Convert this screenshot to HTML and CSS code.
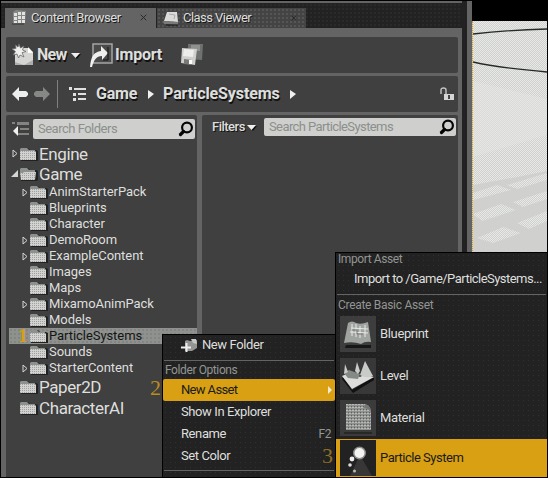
FILE: index.html
```html
<!DOCTYPE html>
<html lang="en">
<head>
<meta charset="utf-8">
<title>Content Browser</title>
<link rel="stylesheet" href="styles.css">
</head>
<body>
<svg class="defs" width="0" height="0">
  <defs>
    <pattern id="grain" width="2" height="2" patternUnits="userSpaceOnUse"><rect width="2" height="2" fill="#d2d2d0"/><rect width="1" height="1" fill="#a0a2a0"/></pattern>
    <pattern id="mesh" width="3" height="3" patternUnits="userSpaceOnUse"><rect width="3" height="3" fill="#8e918e"/><rect y="1" width="2" height="1" fill="#b9bbb9"/><rect x="2" width="1" height="1" fill="#5d5f5d"/></pattern>
    <pattern id="dither" width="2" height="2" patternUnits="userSpaceOnUse"><rect width="1" height="1" fill="#e6e9e6"/><rect x="1" y="1" width="1" height="1" fill="#e6e9e6"/></pattern>
    <symbol id="folder" viewBox="0 0 18 14"><path d="M1 14V2l1-1h6l2 2h6l2 1v10z" fill="#222"/><path d="M0 12V2l1-1h6l2 2h6v2H0z" fill="#8c908e"/><path d="M0 4h15l1 1v8H0z" fill="url(#grain)"/></symbol>
    <symbol id="open" viewBox="0 0 18 14"><path d="M1 14V2l1-1h6l2 2h6l2 1v9l-1 1z" fill="#222"/><path d="M0 12V2l1-1h6l2 2h6v4H0z" fill="#8c908e"/><path d="M0 6h3l1-1h12l-1 8H1z" fill="url(#grain)"/></symbol>
    <symbol id="closed-arrow" viewBox="0 0 6 9"><path d="M1 1v7l4-3.500z" fill="none" stroke="#d4d5d3"/></symbol>
    <symbol id="search" viewBox="0 0 16 16"><circle cx="9" cy="6.500" r="4.900" fill="none" stroke="#050505" stroke-width="2.200"/><path d="M5.500 10.500l-3 3" stroke="#050505" stroke-width="3.200" stroke-linecap="round"/></symbol>
    <symbol id="x" viewBox="0 0 7 7"><path d="M.7.7l5.600 5.600M6.300.7L.7 6.300" stroke="#292929" stroke-width="1"/></symbol>
  </defs>
</svg>
<div class="app">
  <div class="browser">
    <div class="tabs">
      <div class="tab active">
        <svg width="16" height="16" viewBox="0 0 16 16"><path d="M2 2l3-2 10 1-1 12-12 1z" fill="#858885"/><path d="M3 3h3v3H3zM7 2h3v3H7zM11 2h3v3h-3zM3 7h3v3H3zM7 6h3v3H7zM11 6h3v3h-3zM3 11h3v2H3zM7 10h3v3H7zM11 10h3v3h-3z" fill="#e2e3e1"/><path d="M1 14h12" stroke="#333"/></svg>
        <span class="t-cb">Content Browser</span><svg class="close" width="7" height="7"><use href="#x"/></svg>
      </div>
      <div class="tab">
        <svg width="16" height="16" viewBox="0 0 16 16"><path d="M4 2h10l1 10-14-1z" fill="#dcdddb"/><path d="M0 11l15 1v3L1 14z" fill="#777a77"/><path d="M6 4l6 1-1 4" fill="none" stroke="#aaa"/><path d="M3 15h12" stroke="#111"/></svg>
        <span class="t-cv">Class Viewer</span><svg class="close" width="6" height="6"><use href="#x"/></svg>
      </div>
    </div>
    <div class="content">
      <div class="bar toolbar">
        <svg class="i-new" width="22" height="22" viewBox="0 0 22 22"><path d="M3 4h14l4 4v13H3z" fill="#d5d6d4"/><path d="M16 3v6h5z" fill="#fff"/><path d="M3 18l9 3 9-5v5H3z" fill="#adafad"/><path d="M7 0l1.500 4L12 2l-1.500 4L14 7.500l-4 1.200 2 4.300-4-2-1.500 3L5 10l-4 1 2.500-3.500L0 5l4-.500L3.500 1 6 3z" fill="#f0f1ef" stroke="#686a68" stroke-width=".8"/></svg>
        <span class="t-new">New</span>
        <svg class="i-down" width="10" height="7" viewBox="0 0 10 7"><path d="M1 2h9L6 7z" fill="#111"/><path d="M0 1h9L4.500 6z" fill="#f0f1ef"/></svg>
        <svg class="i-import" width="24" height="25" viewBox="0 0 24 25"><path d="M3 1h19v19H3z" fill="#494a49" stroke="#a2a4a2" stroke-width="1.500"/><path d="M0 24C1 13 4 9 11 8V3l7 7-6 7v-4C6 13 4 17 2 24z" fill="#eff0ee"/><path d="M18 4v13h-5" fill="none" stroke="#151515"/></svg>
        <span class="t-import">Import</span>
        <svg class="i-save" width="24" height="22" viewBox="0 0 24 22"><path d="M8 0h15l-1 16-14-1z" fill="#6e716e"/><path d="M11 1h9v6h-9z" fill="#8e918e"/><path d="M2 4l15 1-2 16L1 19z" fill="#cfd0ce"/><path d="M4 5l10 1-1 7-10-1z" fill="#edeeec"/><path d="M4 15l8 1v5l-8-1z" fill="#777a77"/><path d="M9 16h3v4H9z" fill="#fff"/></svg>
      </div>
      <div class="bar nav">
        <svg class="i-back" width="16" height="14" viewBox="0 0 16 14"><path d="M0 7l7-7v4h7l2 2v2l-2 2H7v4z" fill="#eceded"/></svg>
        <svg class="i-next" width="16" height="14" viewBox="0 0 16 14"><path d="M16 7L9 0v4H2L0 6v2l2 2h7v4z" fill="#858885"/></svg>
        <i class="rule"></i>
        <svg class="i-path" width="17" height="14" viewBox="0 0 17 14"><path d="M0 0h3v3H0zM5 1h12v2H5zM4 6h3v3H4zM9 6h8v2H9zM4 11h3v3H4zM9 11h8v2H9z" fill="#e1e2e0"/></svg>
        <span class="t-game">Game</span><svg class="crumb" width="6" height="10"><path d="M0 1v9l6-5z" fill="#f0f1ef"/></svg>
        <span class="t-ps">ParticleSystems</span><svg class="crumb" width="6" height="10"><path d="M0 1v9l6-5z" fill="#f0f1ef"/></svg>
        <svg class="lock" width="14" height="14" viewBox="0 0 14 14"><path d="M1 7V3q0-2 2.500-2T6 3v5" fill="none" stroke="#c3c5c3" stroke-width="1.400"/><path d="M4 7h10v6H4z" fill="#d5d6d4"/><path d="M8 8h2v4H8z" fill="#454545"/></svg>
      </div>
      <div class="panes">
        <div class="pane tree">
          <div class="find"><svg width="17" height="15" viewBox="0 0 17 15"><path d="M0 0h3v2H0zM5 0h12v3H5zM8 6h9v2H8zM5 11h12v2H5z" fill="#818481"/><path d="M1 9l5-5v10z" fill="#f0f1ef"/></svg>
            <div class="search"><span class="t-sf">Search Folders</span><svg width="16" height="16"><use href="#search"/></svg></div></div>
          <div class="node big"><svg class="arrow" width="6" height="9"><use href="#closed-arrow"/></svg><svg class="folder" width="18" height="14"><use href="#folder"/></svg><span>Engine</span></div>
          <div class="node big game"><svg class="arrow" width="8" height="8"><path d="M7 0v7H0z" fill="#d4d5d3"/></svg><svg class="folder" width="18" height="14"><use href="#open"/></svg><span>Game</span></div>
          <div class="node"><svg class="arrow" width="6" height="9"><use href="#closed-arrow"/></svg><svg class="folder" width="18" height="14"><use href="#folder"/></svg><span>AnimStarterPack</span></div>
          <div class="node"><i class="arrow"></i><svg class="folder" width="18" height="14"><use href="#folder"/></svg><span>Blueprints</span></div>
          <div class="node"><i class="arrow"></i><svg class="folder" width="18" height="14"><use href="#folder"/></svg><span>Character</span></div>
          <div class="node"><svg class="arrow" width="6" height="9"><use href="#closed-arrow"/></svg><svg class="folder" width="18" height="14"><use href="#folder"/></svg><span>DemoRoom</span></div>
          <div class="node"><svg class="arrow" width="6" height="9"><use href="#closed-arrow"/></svg><svg class="folder" width="18" height="14"><use href="#folder"/></svg><span>ExampleContent</span></div>
          <div class="node"><i class="arrow"></i><svg class="folder" width="18" height="14"><use href="#folder"/></svg><span>Images</span></div>
          <div class="node"><i class="arrow"></i><svg class="folder" width="18" height="14"><use href="#folder"/></svg><span>Maps</span></div>
          <div class="node"><svg class="arrow" width="6" height="9"><use href="#closed-arrow"/></svg><svg class="folder" width="18" height="14"><use href="#folder"/></svg><span>MixamoAnimPack</span></div>
          <div class="node"><i class="arrow"></i><svg class="folder" width="18" height="14"><use href="#folder"/></svg><span>Models</span></div>
          <div class="node selected"><b class="step">1</b><svg class="folder" width="18" height="14"><use href="#folder"/></svg><span>ParticleSystems</span></div>
          <div class="node"><i class="arrow"></i><svg class="folder" width="18" height="14"><use href="#folder"/></svg><span>Sounds</span></div>
          <div class="node"><svg class="arrow" width="6" height="9"><use href="#closed-arrow"/></svg><svg class="folder" width="18" height="14"><use href="#folder"/></svg><span>StarterContent</span></div>
          <div class="node big"><i class="arrow"></i><svg class="folder" width="18" height="14"><use href="#folder"/></svg><span class="t-root">Paper2D</span><b class="step two">2</b></div>
          <div class="node big"><i class="arrow"></i><svg class="folder" width="18" height="14"><use href="#folder"/></svg><span class="t-root">CharacterAI</span></div>
        </div>
        <div class="pane assets">
          <span class="filters">Filters</span><svg class="i-down2" width="10" height="7" viewBox="0 0 10 7"><path d="M1 2h9L6 7z" fill="#111"/><path d="M0 1h9L4.500 6z" fill="#f0f1ef"/></svg>
          <div class="search"><span class="t-sp">Search ParticleSystems</span><svg width="16" height="16"><use href="#search"/></svg></div>
        </div>
      </div>
    </div>
  </div>
  <div class="gutter"></div>
  <div class="viewport">
    <svg width="74" height="231" viewBox="0 0 74 231">
      <g fill="url(#dither)"><path d="M0 0h74v150l-30 6-44 8z"/><path d="M0 172l24-8 14 5-38 10zM34 164l40-12v7l-30 9zM0 193l28-10 15 6-34 11zM40 181l34-11v8l-24 8zM4 217l26-11 18 6-28 10zM44 202l30-12v10l-18 8z"/></g>
      <path d="M0 60l74 18v36L0 136z" fill="#e3e6e3" opacity=".5"/>
      <path d="M0 13Q35 9 74 8M0 41Q26 47 74 51" fill="none" stroke="#252a28" stroke-width="1.300"/>
    </svg>
  </div>
</div>

<div class="menu folder-menu">
  <div class="item first"><svg width="17" height="15" viewBox="0 0 17 15"><path d="M4 3l2-1 3 1 7-1v8l-5 3H4z" fill="#929592"/><path d="M10 1h5l1 5-4-1z" fill="#c6c8c6"/><path d="M5.500 5v9M0 9.500h10" stroke="#eee" stroke-width="2"/></svg><span>New Folder</span></div>
  <div class="sep"></div>
  <div class="head h-fo">Folder Options</div>
  <div class="item hot"><span class="t-na">New Asset</span><svg width="5" height="8"><path d="M0 0v8l4-4z" fill="#f2e9d0"/></svg></div>
  <div class="item"><span class="t-show">Show In Explorer</span></div>
  <div class="item"><span>Rename</span><kbd>F2</kbd></div>
  <div class="item"><span>Set Color</span><b class="step three">3</b></div>
  <div class="sep last"></div>
</div>

<div class="menu asset-menu">
  <div class="head h-ia">Import Asset</div>
  <div class="imp">Import to /Game/ParticleSystems...</div>
  <div class="sep"></div>
  <div class="head h-cba">Create Basic Asset</div>
  <div class="asset"><svg width="36" height="36" viewBox="0 0 36 36"><rect width="36" height="36" fill="#3d3d3d"/><path d="M6 29h25v3H5z" fill="#171717"/><path d="M8 7q4-3 8 0 5 2 12-1l3 20q-6-1-10 2-8-3-17-1z" fill="#a0a4a0"/><path d="M12 8v12M16 8v13M20 10v12M25 9v12M11 12l17 1M10 16l18 1" stroke="#e7e9e6"/><path d="M12 14h5v4h6" fill="none" stroke="#777"/></svg><span>Blueprint</span></div>
  <div class="asset"><svg width="36" height="36" viewBox="0 0 36 36"><rect width="36" height="36" fill="#383838"/><path d="M3 19l9 13 22-13v3L13 35 2 21z" fill="#111"/><path d="M2 18l9-4 9 5 4-2 10 2-22 12z" fill="#dddedc"/><path d="M4 15l5-3 11 4-2 5-10-1z" fill="#858a86"/><path d="M25 3l8 15q-7 3-13-1zM17 4l3 9-2 3-3-3zM5 6l3 8-4 2z" fill="#c9cbc8"/></svg><span>Level</span></div>
  <div class="asset"><svg width="36" height="36" viewBox="0 0 36 36"><rect width="36" height="36" fill="#3b3b3b"/><path d="M6 4h19q6 2 6 8v18H6z" fill="url(#mesh)"/><path d="M25 4q6 2 6 8-3-4-7-4z" fill="#737673"/><path d="M4 33h28" stroke="#171717"/></svg><span>Material</span></div>
  <div class="asset hot"><svg width="36" height="36" viewBox="0 0 36 36"><rect width="36" height="36" fill="#222"/><path d="M20 15L10 36h22z" fill="#363736"/><circle cx="19.500" cy="13" r="6.500" fill="#8a8d8a"/><circle cx="19.500" cy="13" r="5" fill="#f3f4f2"/><circle cx="12" cy="19" r="2.400" fill="#eee"/><circle cx="10" cy="25" r="1.800" fill="#ddd"/><circle cx="14.500" cy="31" r="1.500" fill="#bbb"/></svg><span class="t-part">Particle System</span></div>
</div>
</body>
</html>
```
FILE: styles.css
```css
* { box-sizing: border-box; }
body { margin: 0; width: 548px; height: 478px; overflow: hidden; background: #000; color: #dedfdd; font: 13px/16px Roboto, sans-serif; position: relative; }
svg { display: block; flex: none; }
span { white-space: nowrap; flex: none; }
.defs { position: absolute; }
.app { display: flex; height: 477px; padding: 1px 1px 0; }
.browser { width: 461px; border-top: 2px solid #646464; background: #646464; }
.tabs { height: 25px; padding: 5px 0 0 4px; display: flex; background: radial-gradient(circle, #343434 .6px, transparent .8px) 0 0 / 4px 4px #222; }
.tab { display: flex; align-items: center; height: 20px; width: 150px; padding: 0 9px 1px 6px; background: radial-gradient(circle, #686868 .6px, transparent .8px) 0 0 / 4px 4px #444; border-left: 1px solid #222; text-shadow: 1px 1px #161616; }
.tab.active { background: #646464; width: 151px; border: 0; }
.tab span { margin-left: 4px; }
.t-cb { letter-spacing: -.45px; }
.t-cv { letter-spacing: -.55px; }
.tab .close { margin-left: auto; }
.content { padding: 9px 4px 0 5px; }
.bar { height: 36px; background: #404040; border-radius: 2px; display: flex; align-items: center; margin-bottom: 3px; font-weight: 700; font-size: 16px; text-shadow: 1px 2px #111; }
.toolbar { padding-left: 6px; }
.toolbar span { margin-top: -1px; }
.t-new { margin-left: 3px; width: 34px; letter-spacing: -.7px; }
.i-import { margin-left: 9px; }
.t-import { margin-left: 1px; width: 48px; letter-spacing: -.2px; }
.i-save { margin-left: 17px; }
.nav { padding-left: 6px; }
.i-next { margin-left: 6px; }
.rule { width: 1px; height: 28px; background: #808080; margin: 0 11px 0 7px; }
.t-game { margin-left: 10px; width: 42px; letter-spacing: -.2px; }
.crumb { margin-left: 10px; }
.t-ps { margin-left: 9px; width: 117px; letter-spacing: -.1px; }
.lock { margin-left: auto; margin-right: 4px; }
.panes { display: flex; gap: 5px; height: 362px; }
.pane { background: #404040; border-radius: 2px 2px 0 0; }
.tree { width: 191px; padding-top: 4px; }
.find { display: flex; align-items: center; height: 20px; padding: 0 2px 0 6px; gap: 4px; margin-bottom: 4px; }
.search { flex: 1; height: 20px; background: #cfd0ce; border-radius: 2px; display: flex; align-items: center; justify-content: space-between; padding: 0 1px 0 5px; color: #8c8f8c; letter-spacing: -.5px; }
.assets .t-sp { letter-spacing: -.6px; }
.node { display: flex; align-items: center; height: 16px; padding-left: 15px; letter-spacing: -.06px; }
.node .arrow { width: 8px; margin-right: 1px; }
.node span { margin-left: 1px; }
.node .folder { height: 14px; }
.node.big { height: 21px; padding-left: 5px; font-size: 17px; letter-spacing: -.4px; }
.node.game { height: 20px; }
.node.selected { background: radial-gradient(circle, #747774 .6px, transparent .8px) 0 0 / 4px 4px #8e918e; margin-left: 3px; padding-left: 8px; color: #151515; }
.step { color: #d8a012; font: 16px/16px "Liberation Serif", serif; letter-spacing: 0; }
.selected .step { width: 13px; padding-left: 1px; font-size: 19px; font-weight: 700; }
.step.two { margin-left: auto; padding-right: 36px; font-size: 22px; padding-top: 3px; color: #b98d1d; }
.assets { width: 256px; padding: 3px 2px 0 10px; display: flex; align-items: flex-start; }
.filters { text-shadow: 1px 1px #111; font-weight: 500; line-height: 18px; width: 34px; letter-spacing: -.5px; }
.i-down2 { margin: 6px 7px 0 1px; }
.assets .search { height: 18px; flex: 1; }
.gutter { width: 10px; background: #222; border-right: 5px solid #646464; }
.viewport { flex: 1; margin-top: 20px; border-left: 1px dotted #d8a012; background: #d0d1ce; overflow: hidden; }
.menu { position: absolute; background: radial-gradient(circle, #303030 .6px, transparent .8px) 0 0 / 5px 5px #222; border: 1px solid #000; display: flex; flex-direction: column; letter-spacing: -.4px; }
.folder-menu { left: 162px; top: 334px; width: 174px; height: 144px; }
.item { height: 22px; display: flex; align-items: center; padding: 0 2px 0 18px; flex: none; }
.item.first { height: 20px; gap: 4px; margin-bottom: 5px; }
.hot { background: #d8a012; color: #1b1b1b; }
.item.hot { border-radius: 2px; }
.item span + * { margin-left: auto; }
.t-na { letter-spacing: -.65px; }
.item kbd { font: 12px/16px Roboto, sans-serif; color: #929592; padding-right: 2px; }
.step.three { font-size: 22px; color: #8d6f28; }
.sep { height: 1px; background: #646464; margin: 0 1px; flex: none; }
.sep.last { margin-top: 3px; }
.head { color: #929592; font-size: 12px; padding-left: 2px; height: 18px; line-height: 18px; white-space: nowrap; }
.asset-menu { left: 335px; top: 252px; width: 213px; height: 226px; }
.asset-menu .head { height: 12px; line-height: 12px; }
.imp { height: 29px; line-height: 27px; padding-left: 18px; white-space: nowrap; letter-spacing: -.53px; }
.asset-menu .sep { margin-bottom: 4px; }
.asset-menu .h-cba { height: 14px; letter-spacing: -.3px; }
.asset { height: 42px; display: flex; align-items: center; padding-left: 4px; gap: 4px; flex: none; letter-spacing: -.35px; }
.t-part { letter-spacing: -.48px; }
.asset.hot { height: 38px; }
```
